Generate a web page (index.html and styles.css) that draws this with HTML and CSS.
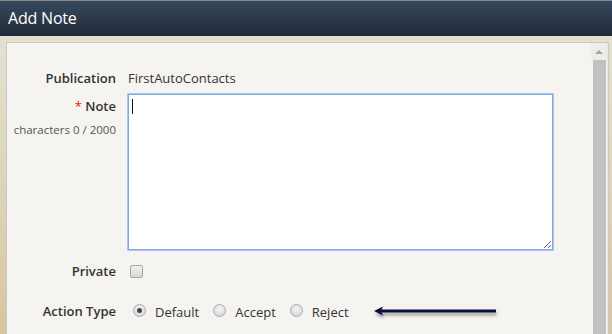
FILE: index.html
```html
<!DOCTYPE html>
<html lang="en">
<head>
    <meta charset="UTF-8">
    <meta name="viewport" content="width=device-width, initial-scale=1.0">
    <title>Add Note</title>
    <link rel="stylesheet" href="styles.css">
</head>
<body>

    <div class="dialog-header">Add Note</div>

    <div class="dialog-body">
        <div class="panel">
            <div class="form-area">
                <div class="form-row">
                    <div class="label">Publication</div>
                    <div class="value">FirstAutoContacts</div>
                </div>

                <div class="form-row note-row">
                    <div class="label-col">
                        <div class="label"><span class="required">*</span> Note</div>
                        <div class="counter">characters 0 / 2000</div>
                    </div>
                    <div class="value note-wrap">
                        <textarea class="note-box" autofocus></textarea>
                        <span class="caret"></span>
                    </div>
                </div>

                <div class="form-row private-row">
                    <div class="label">Private</div>
                    <div class="value">
                        <span class="check"></span>
                    </div>
                </div>

                <div class="form-row action-row">
                    <div class="label">Action Type</div>
                    <div class="value options">
                        <span class="option"><span class="radio checked"></span>Default</span>
                        <span class="option"><span class="radio"></span>Accept</span>
                        <span class="option"><span class="radio"></span>Reject</span>
                        <svg class="arrow" width="128" height="16" viewBox="0 0 128 16">
                            <defs>
                                <filter id="shade" x="-10%" y="-50%" width="120%" height="250%">
                                    <feDropShadow dx="1" dy="3" stdDeviation="1.5" flood-color="#000" flood-opacity="0.35"/>
                                </filter>
                            </defs>
                            <g filter="url(#shade)">
                                <line x1="8" y1="6" x2="123" y2="6" stroke="#0c1140" stroke-width="3"/>
                                <polygon points="1,6 10,1.5 8,6 10,10.5" fill="#0c1140"/>
                            </g>
                        </svg>
                    </div>
                </div>
            </div>

            <div class="scrollbar">
                <div class="scroll-up"></div>
                <div class="scroll-thumb"></div>
            </div>
        </div>
    </div>

</body>
</html>
```

FILE: styles.css
```css
html, body {
    height: 100%;
}

body {
    margin: 0;
    overflow: hidden;
    font-family: 'Open Sans', 'Liberation Sans', sans-serif;
    font-size: 13px;
    color: #333;
    background: linear-gradient(to bottom, #e4e4d6 0%, #ddd6bc 50%, #d9c59e 100%);
    display: flex;
    flex-direction: column;
}

.dialog-header {
    height: 35px;
    border-top: 1px solid #8a8a8a;
    background: linear-gradient(to bottom, #37485f, #212b38);
    color: #fff;
    font-size: 16px;
    line-height: 34px;
    padding-left: 8px;
    letter-spacing: -0.2px;
}

.dialog-body {
    flex: 1;
    padding: 6px 3px 0 6px;
    display: flex;
}

.panel {
    flex: 1;
    display: flex;
    background: #f5f4f0;
    border: 1px solid #c9c9c9;
    border-bottom: none;
}

.form-area {
    flex: 1;
    padding-top: 25px;
}

.form-row {
    display: flex;
    align-items: center;
    gap: 12px;
}

.label,
.label-col {
    width: 109px;
    text-align: right;
    flex-shrink: 0;
}

.label {
    font-weight: 600;
    line-height: 20px;
}

.value {
    line-height: 20px;
}

.required {
    color: #e02020;
    font-weight: 400;
}

.note-row {
    align-items: flex-start;
    margin-top: 6px;
}

.note-row .label {
    margin-top: 2px;
}

.counter {
    font-size: 11.5px;
    color: #555;
    margin-top: 7px;
    line-height: 14px;
}

.note-wrap {
    position: relative;
}

.note-box {
    display: block;
    width: 417px;
    height: 148px;
    margin: 0;
    padding: 3px;
    border: 1px solid #7ea8e6;
    box-shadow: 0 0 0 1px #a9c6f0;
    border-radius: 0;
    background: #fff;
    font-family: inherit;
    font-size: 13px;
    resize: both;
    outline: none;
}

.caret {
    position: absolute;
    left: 4px;
    top: 5px;
    width: 1px;
    height: 15px;
    background: #111;
}

.private-row {
    margin-top: 11px;
}

.check {
    display: block;
    width: 11px;
    height: 11px;
    margin-left: 2px;
    border: 1px solid #a6a6a6;
    border-radius: 2px;
    background: linear-gradient(to bottom, #f0f0f0, #d8d8d8);
}

.action-row {
    margin-top: 17px;
}

.options {
    display: flex;
    align-items: center;
}

.option {
    display: flex;
    align-items: center;
    margin-right: 9px;
    line-height: 22px;
    padding-top: 3px;
}

.radio {
    width: 11px;
    height: 11px;
    margin: 0 9px 3px 5px;
    border: 1px solid #aaa;
    border-radius: 50%;
    background: radial-gradient(circle at 50% 35%, #f4f4f4, #d2d2d2);
    position: relative;
}

.radio.checked::after {
    content: "";
    position: absolute;
    left: 3px;
    top: 3px;
    width: 5px;
    height: 5px;
    border-radius: 50%;
    background: #444;
}

.arrow {
    margin-left: 15px;
    margin-top: 5px;
}

.scrollbar {
    width: 16px;
    display: flex;
    flex-direction: column;
    background: #f5f4f0;
    border-right: 1px solid #e6e6e6;
}

.scroll-up {
    height: 17px;
    background: #eeede9;
    position: relative;
}

.scroll-up::after {
    content: "";
    position: absolute;
    left: 4px;
    top: 7px;
    border-left: 4px solid transparent;
    border-right: 4px solid transparent;
    border-bottom: 4px solid #a3a3a3;
}

.scroll-thumb {
    flex: 1;
    margin: 0 1px 0 2px;
    background: #c1c1c1;
}
```
